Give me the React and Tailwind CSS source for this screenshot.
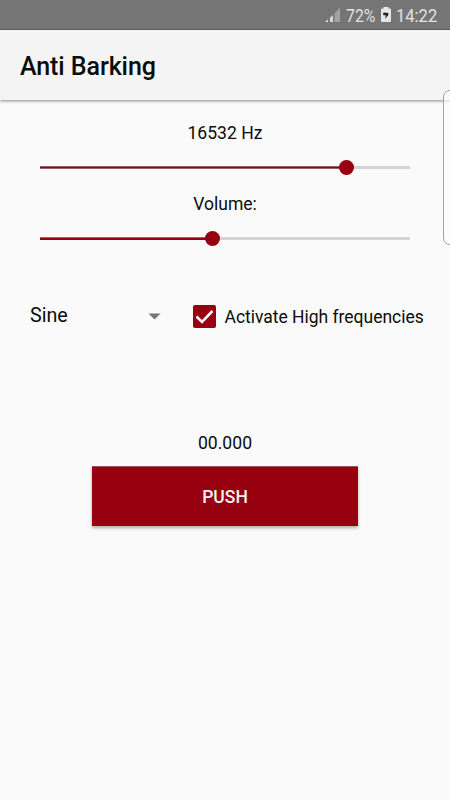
import React from 'react'

function StatusBar() {
    return (
        <div className="relative h-[30px] bg-[#757575] border-b border-[#5c5c5c] text-[#e2e2e2]">
            <svg className="absolute left-[325px] top-[7px]" width="16" height="16" viewBox="0 0 16 16">
                <path d="M0 15 L3 12.5 V15 Z" fill="#e2e2e2" />
                <path d="M5 15 V10.5 L8 8 V15 Z" fill="#d6d6d6" />
                <path d="M9.5 15 V6.5 L15 0.5 V15 Z" fill="#a2a2a2" />
            </svg>
            <span className="absolute left-[346px] top-[6px] text-[18px] leading-5 origin-left scale-x-[0.88]">72%</span>
            <svg className="absolute left-[380px] top-[7px]" width="12" height="16" viewBox="0 0 12 16">
                <path d="M3.5 0 H8.5 V1.5 H10 Q11 1.5 11 2.5 V14 Q11 15 10 15 H2 Q1 15 1 14 V2.5 Q1 1.5 2 1.5 H3.5 Z" fill="#e6e6e6" />
                <path d="M3.5 5.5 L8.5 6 L8 8.5 L5 12 L6 8.5 L3 8 Z" fill="#222" />
            </svg>
            <span className="absolute left-[396px] top-[6px] text-[18px] leading-5 origin-left scale-x-[0.92]">14:22</span>
        </div>
    )
}

function Slider({ value, track }) {
    return (
        <div className="relative mx-10 h-[15px] flex items-center">
            <div className="w-full h-[3px] bg-[#d4d4d4]">
                <div className={`h-full ${track}`} style={{ width: `${value}px` }}></div>
            </div>
            <div className="absolute w-[15px] h-[15px] -ml-[7.5px] rounded-full bg-[#96000f]" style={{ left: `${value}px` }}></div>
        </div>
    )
}

export default function App() {
    return (
        <div className="relative w-[450px] h-[800px] overflow-hidden bg-[#fafafa] text-[#0c0c0c] font-['Roboto',sans-serif]">
            <StatusBar />
            <header className="h-[70px] flex items-center pl-5 pt-[4px] bg-[#f4f4f4] shadow-[0_1px_3px_rgba(0,0,0,0.45)]">
                <h1 className="text-[25px] leading-8 font-medium tracking-[-0.08px]">Anti Barking</h1>
            </header>

            <main className="flex flex-col pt-[23px]">
                <p className="text-center text-[17.6px] leading-5">16532 Hz</p>
                <div className="mt-[17px]">
                    <Slider value={306} track="bg-[#96000f] border-y border-[#936068]" />
                </div>
                <p className="mt-[19px] text-center text-[17.5px] leading-5">Volume:</p>
                <div className="mt-[17px]">
                    <Slider value={172.5} track="bg-[#96000f] border-t border-[#b06068]" />
                </div>

                <div className="mt-[58px] h-6 flex items-center pl-[30px]">
                    <span className="w-[118px] text-[19.7px] leading-6">Sine</span>
                    <svg width="13" height="7" viewBox="0 0 13 7">
                        <path d="M0.5 0.5 H12.5 L6.5 6.5 Z" fill="#757575" />
                    </svg>
                    <div className="ml-8 w-[23px] h-[23px] rounded-[2px] bg-[#96000f]">
                        <svg width="23" height="23" viewBox="0 0 23 23">
                            <path d="M3.5 11.5 L9 17 L19.5 6" fill="none" stroke="#fafafa" strokeWidth="2.6" />
                        </svg>
                    </div>
                    <span className="ml-[8.5px] pt-[2px] text-[17.5px] leading-6 tracking-[-0.02px] whitespace-nowrap">Activate High frequencies</span>
                </div>

                <p className="mt-[105px] text-center text-[17.6px] leading-5">00.000</p>
                <button className="mt-[13px] mx-auto w-[266px] h-[60px] pt-[2px] bg-[#96000f] border-t border-[#8f5b60] text-[#f2f2f2] text-[17.5px] font-medium shadow-[0_2px_3px_rgba(0,0,0,0.3)]">
                    PUSH
                </button>
            </main>

            {/* edge panel handle */}
            <div className="absolute left-[443px] top-[90px] w-5 h-[155px] rounded-[7px] border border-[#a0a0a0] bg-white/60"></div>
        </div>
    )
}
